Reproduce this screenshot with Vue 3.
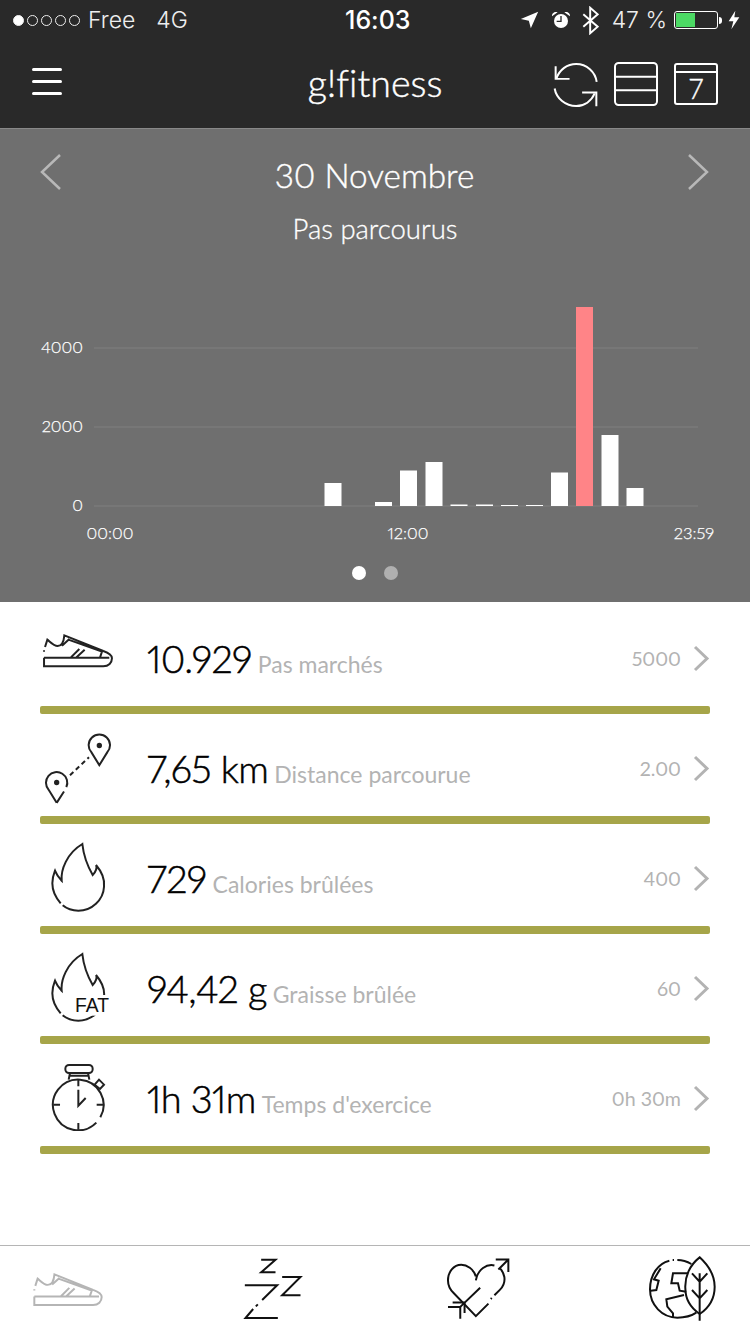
<script setup>
const bars = [
  { x: 324.5, top: 483 },
  { x: 375, top: 502 },
  { x: 400, top: 470.5 },
  { x: 425.5, top: 462 },
  { x: 450.5, top: 504.5 },
  { x: 476, top: 504.5 },
  { x: 501, top: 505 },
  { x: 526, top: 505 },
  { x: 551, top: 472.5 },
  { x: 576, top: 307, hot: true },
  { x: 601.5, top: 435 },
  { x: 626.5, top: 488 }
]

const gridLines = [
  { y: 348, label: '4000' },
  { y: 427, label: '2000' },
  { y: 506, label: '0' }
]

const hours = [
  { x: 110, label: '00:00' },
  { x: 408, label: '12:00' },
  { x: 694, label: '23:59' }
]

const stats = [
  { id: 'steps', value: '10.929', label: 'Pas marchés', goal: '5000' },
  { id: 'route', value: '7,65 km', label: 'Distance parcourue', goal: '2.00' },
  { id: 'flame', value: '729', label: 'Calories brûlées', goal: '400' },
  { id: 'fat', value: '94,42 g', label: 'Graisse brûlée', goal: '60' },
  { id: 'watch', value: '1h 31m', label: "Temps d'exercice", goal: '0h 30m' }
]

const flame = 'M122 220C108 204 97 182 97 160C97 145 101 132 105 122C110 135 118 145 125 152C122 120 140 70 187 42C190 70 195 95 218 135C228 125 232 112 228 105C245 125 255 145 252 170C250 210 215 242 175 242C155 242 140 236 128 226'
const shoe = 'M72 112V138H250C266 138 276 127 276 114C276 104 268 98 250 92L133 45C131 66 125 77 113 77C100 77 90 64 82 58L75 80M72 90V94M72 112H268M126 76L148 56M145 58L246 94L240 112M152 112L178 86M168 112L194 88'
</script>

<template>
  <div class="page">
    <header class="top">
      <div class="status">
        <div class="status-left">
          <div class="signal">
            <i class="on"></i><i></i><i></i><i></i><i></i>
          </div>
          <span class="carrier">Free</span>
          <span class="net">4G</span>
        </div>
        <span class="clock">16:03</span>
        <div class="status-right">
          <svg class="st-loc" viewBox="66 36 56 54"><polygon points="68,60 120,38 98,88 92,65" fill="#fff" /></svg>
          <svg class="st-alarm" viewBox="158 32 60 54">
            <circle cx="188" cy="62" r="21" fill="#fff" />
            <path d="M161 48C160 38 170 32 178 36ZM215 48C216 38 206 32 198 36Z" fill="#fff" />
            <path d="M188 47V63H175" fill="none" stroke="#292929" stroke-width="4" />
          </svg>
          <svg class="st-bt" viewBox="250 18 52 86"><path d="M254 42L298 80L275 100V22L298 42L254 80" fill="none" stroke="#fff" stroke-width="6" /></svg>
          <span class="pct">47 %</span>
          <div class="battery"><div class="battery-fill"></div></div>
          <div class="battery-nub"></div>
          <svg class="st-bolt" viewBox="686 30 36 60"><polygon points="708,32 688,64 702,64 696,88 720,52 705,52" fill="#fff" /></svg>
        </div>
      </div>
      <nav class="nav">
        <div class="burger"><span></span><span></span><span></span></div>
        <h1 class="brand">g!fitness</h1>
        <div class="nav-icons">
          <svg class="nav-sync" viewBox="160 182 136 136" fill="none" stroke="#fff" stroke-width="6">
            <path d="M170 232C180 205 203 188 230 188C262 188 288 212 292 242" />
            <path d="M168 195V233H210" />
            <path d="M165 262C170 292 198 315 230 315C255 315 276 300 286 277" />
            <path d="M248 274H291V316" />
          </svg>
          <svg class="nav-table" viewBox="342 187 132 132" fill="none" stroke="#fff" stroke-width="6">
            <rect x="345" y="190" width="126" height="126" rx="11" />
            <path d="M345 231H471M345 272H471" />
          </svg>
          <div class="nav-cal">7</div>
        </div>
      </nav>
    </header>

    <section class="hero">
      <div class="hero-head">
        <svg class="chev" viewBox="0 0 22 38"><path d="M20 2L2 19L20 36" /></svg>
        <div class="hero-date">30 Novembre</div>
        <svg class="chev" viewBox="0 0 22 38"><path d="M2 2L20 19L2 36" /></svg>
      </div>
      <div class="hero-title">Pas parcourus</div>
      <svg class="chart" viewBox="0 260 750 290" width="750" height="290">
        <g v-for="line in gridLines" :key="line.y">
          <line x1="94" x2="698" :y1="line.y" :y2="line.y" stroke="#808080" stroke-width="1" />
          <text x="83" :y="line.y + 5" text-anchor="end" class="chart-text">{{ line.label }}</text>
        </g>
        <rect
          v-for="bar in bars"
          :key="bar.x"
          :x="bar.x"
          :y="bar.top"
          width="17"
          :height="506 - bar.top"
          :fill="bar.hot ? '#ff8487' : '#fff'"
        />
        <text v-for="h in hours" :key="h.x" :x="h.x" y="539" text-anchor="middle" class="chart-text">{{ h.label }}</text>
      </svg>
      <div class="dots"><span class="dot active"></span><span class="dot"></span></div>
    </section>

    <main class="stats">
      <div v-for="s in stats" :key="s.id" class="stat">
        <div class="stat-body">
          <div class="stat-icon">
            <svg v-if="s.id === 'steps'" class="ic-shoe" viewBox="66 38 216 106" fill="none" stroke="#222" stroke-width="6">
              <path :d="shoe" />
            </svg>
            <svg v-else-if="s.id === 'route'" class="ic-route" viewBox="70 335 210 215" fill="none" stroke="#222" stroke-width="6">
              <path d="M239 431L215 392A32 32 0 1 1 263 392Z" />
              <circle cx="239" cy="372" r="5" fill="#222" />
              <path d="M111 544L87 505A32 32 0 1 1 140 497M133 510L111 544" />
              <circle cx="111" cy="483" r="5" fill="#222" />
              <path d="M151 461L208 407" stroke-dasharray="14 10" />
            </svg>
            <svg v-else-if="s.id === 'flame'" class="ic-flame" viewBox="90 36 170 212" fill="none" stroke="#222" stroke-width="6">
              <path :d="flame" />
            </svg>
            <svg v-else-if="s.id === 'fat'" class="ic-fat" viewBox="90 36 180 212" fill="none" stroke="#222" stroke-width="6">
              <path :d="flame" />
              <rect x="156" y="165" width="114" height="62" fill="#fff" stroke="none" />
              <text x="165" y="215" class="fat-text">FAT</text>
            </svg>
            <svg v-else class="ic-watch" viewBox="90 700 170 205" fill="none" stroke="#222" stroke-width="6">
              <path d="M229 879A76 76 0 1 1 241 863" />
              <rect x="136" y="706" width="82" height="24" rx="11" />
              <path d="M150 730L146 750M204 730L208 750M150 738H204" />
              <path d="M224 765L237 750L252 765L240 778Z" />
              <path d="M175 750V770M175 880V900M100 825H120M230 825H250" />
              <path d="M175 780V828L197 805" />
            </svg>
          </div>
          <span class="stat-value">{{ s.value }}</span>
          <span class="stat-label">{{ s.label }}</span>
          <div class="stat-right">
            <span class="stat-goal">{{ s.goal }}</span>
            <svg class="stat-chev" viewBox="0 0 17 27"><path d="M2 2L14 13.5L2 25" /></svg>
          </div>
        </div>
        <div class="stat-bar"></div>
      </div>
    </main>

    <footer class="tabs">
      <svg class="tab-shoe" viewBox="66 38 216 106" fill="none" stroke="#b5b5b5" stroke-width="6">
        <path :d="shoe" />
      </svg>
      <svg class="tab-zzz" viewBox="725 52 185 192" fill="none" stroke="#111" stroke-width="6">
        <path d="M782 60H825L782 98H825M845 112H900L845 167H900" />
        <path d="M733 137H830L785 181M772 194L766 200M758 208L735 235H832" />
      </svg>
      <svg class="tab-heart" viewBox="212 50 196 192" fill="none" stroke="#111" stroke-width="6">
        <path d="M302 108C295 85 275 73 258 73C235 73 218 95 218 120C218 135 225 148 235 158L302 228L340 190M347 176L350 173M358 165L375 148C385 138 390 125 388 110C386 100 381 90 375 84M358 75C335 70 308 85 302 120" />
        <path d="M400 57L370 87M315 142L255 200M362 57H400V95" />
        <path d="M218 200H258M232 187H268M255 236V198M268 218V187" />
      </svg>
      <svg class="tab-earth" viewBox="820 48 204 198" fill="none" stroke="#111" stroke-width="6">
        <path d="M975 52C945 75 930 110 932 145C932 180 950 205 975 222C1000 205 1020 180 1020 140C1020 105 1000 75 975 52Z" />
        <path d="M975 100V242M952 100L975 125L998 100M952 150L975 175L998 150" />
        <path d="M950 72C935 63 920 60 908 60M898 60H894M884 62C850 70 826 105 826 148C826 195 862 233 908 233C930 233 950 228 965 218" />
        <path d="M858 85L838 118L852 122L845 150L828 152" />
        <path d="M940 100H895L890 130H910L915 152L935 155" />
        <path d="M928 165L875 178L878 200L895 220V232" />
      </svg>
    </footer>
  </div>
</template>

<style>
html, body { margin: 0; background: #fff; }
</style>

<style scoped>
.page {
  width: 750px;
  height: 1334px;
  display: flex;
  flex-direction: column;
  font-family: Lato, "Open Sans", sans-serif;
  font-weight: 300;
  font-variant-numeric: proportional-nums;
  font-variant-ligatures: none;
  overflow: hidden;
}

.top {
  height: 128px;
  background: #292929;
  color: #fff;
  display: flex;
  flex-direction: column;
  flex-shrink: 0;
}

.status {
  height: 40px;
  position: relative;
  display: flex;
  align-items: center;
  justify-content: space-between;
  padding: 0 10px 0 13px;
  font-family: Inter, sans-serif;
  font-size: 23px;
  font-weight: 300;
  color: #eee;
}

.status-left, .status-right {
  display: flex;
  align-items: center;
}

.signal {
  display: flex;
  gap: 3px;
  margin-right: 8px;
}

.signal i {
  width: 9px;
  height: 9px;
  border: 1px solid #eee;
  border-radius: 50%;
}

.signal i.on { background: #fff; }

.net { margin-left: 21px; }

.clock {
  position: absolute;
  left: 345px;
  font-size: 25px;
  font-weight: 500;
  color: #fff;
}

.st-loc { width: 19px; height: 18px; }
.st-alarm { width: 20px; height: 18px; margin-left: 12px; }
.st-bt { width: 17px; height: 29px; margin-left: 11px; }
.pct { margin-left: 13px; }

.battery {
  width: 40px;
  height: 14px;
  border: 1px solid #fff;
  border-radius: 3px;
  margin-left: 7px;
  padding: 1px;
  box-sizing: content-box;
}

.battery-fill {
  width: 19px;
  height: 100%;
  background: #4cd964;
}

.battery-nub {
  width: 3px;
  height: 7px;
  margin-left: 1px;
  background: #fff;
  border-radius: 0 3px 3px 0;
}

.st-bolt { width: 12px; height: 20px; margin-left: 6px; }

.nav {
  flex: 1;
  position: relative;
  display: flex;
  align-items: center;
  justify-content: space-between;
  padding: 0 32px;
}

.burger {
  width: 30px;
  display: flex;
  flex-direction: column;
  gap: 9px;
  margin-top: -6px;
}

.burger span {
  height: 3px;
  background: #fff;
  border-radius: 2px;
}

.brand {
  position: absolute;
  left: 0;
  right: 0;
  margin: -4px 0 0;
  text-align: center;
  font-size: 37.5px;
  font-weight: 300;
  -webkit-text-stroke: 0.4px #fff;
}

.nav-icons {
  display: flex;
  align-items: center;
  gap: 16px;
  position: relative;
}

.nav-sync { width: 45px; height: 45px; }
.nav-table { width: 44px; height: 44px; }

.nav-cal {
  width: 40px;
  height: 30px;
  padding-top: 8px;
  border: 2px solid #fff;
  border-radius: 3px;
  background: linear-gradient(#fff, #fff) 0 6px / 100% 2px no-repeat;
  text-align: center;
  font-size: 27px;
  font-weight: 300;
  line-height: 32px;
  -webkit-text-stroke: 0.4px #fff;
}

.hero {
  height: 474px;
  background: #6f6f6f;
  border-top: 1px solid #888;
  box-sizing: border-box;
  color: #fff;
  display: flex;
  flex-direction: column;
  flex-shrink: 0;
}

.hero-head {
  display: flex;
  align-items: flex-start;
  justify-content: space-between;
  padding: 24px 41px 0 40px;
}

.hero-date {
  font-size: 33.3px;
  line-height: 45px;
  -webkit-text-stroke: 0.4px #fff;
}

.chev {
  width: 22px;
  height: 38px;
  fill: none;
  stroke: #b8b8b8;
  stroke-width: 2.5;
}

.hero-title {
  text-align: center;
  font-size: 27.5px;
  line-height: 34px;
  margin-top: 14px;
  -webkit-text-stroke: 0.3px #fff;
}

.chart { display: block; margin-top: 14px; }

.chart-text {
  fill: #fff;
  font-size: 16.5px;
  font-family: Lato, "Open Sans", sans-serif;
  font-weight: 300;
  stroke: #fff;
  stroke-width: 0.25px;
}

.dots {
  display: flex;
  justify-content: center;
  gap: 18px;
  margin-top: 16px;
}

.dot {
  width: 14px;
  height: 14px;
  border-radius: 50%;
  background: #b0b0b0;
}

.dot.active { background: #fff; }

.stats {
  flex: 1;
  padding: 2px 40px 0;
  background: #fff;
}

.stat {
  height: 110px;
  display: flex;
  flex-direction: column;
}

.stat-body {
  flex: 1;
  display: flex;
  align-items: baseline;
  padding-top: 31px;
  box-sizing: border-box;
}

.stat-icon {
  width: 107px;
  flex-shrink: 0;
  align-self: flex-start;
  position: relative;
}

.stat-icon svg {
  position: absolute;
  display: block;
}

.ic-shoe { width: 72px; height: 35.3px; left: 2px; top: -2px; }
.ic-route { width: 70px; height: 72px; left: 3px; top: -12px; }
.ic-flame { width: 56.7px; height: 70.7px; left: 10px; top: -13px; }
.ic-fat { width: 60px; height: 70.7px; left: 10px; top: -13px; }
.ic-watch { width: 56.7px; height: 68.3px; left: 10px; top: -12px; }

.fat-text {
  font-family: "Liberation Sans", sans-serif;
  font-size: 58px;
  font-weight: 400;
  fill: #111;
  stroke: none;
}

.stat-value {
  font-size: 38px;
  font-weight: 300;
  letter-spacing: -0.6px;
  color: #000;
  margin-right: 6px;
  -webkit-text-stroke: 0.5px #000;
}

.stat-label {
  font-size: 23px;
  color: #b3b3b3;
  font-weight: 400;
}

.stat-right {
  margin-left: auto;
  margin-top: 2px;
  height: 42px;
  align-self: flex-start;
  display: flex;
  align-items: center;
}

.stat-goal {
  font-size: 19.6px;
  color: #b3b3b3;
  font-weight: 400;
}

.stat-chev {
  width: 17px;
  height: 27px;
  margin-left: 12px;
  fill: none;
  stroke: #b3b3b3;
  stroke-width: 3;
}

.stat-bar {
  height: 8px;
  background: #a6a549;
  border-radius: 2px;
}

.tabs {
  height: 86px;
  border-top: 1px solid #b5b5b5;
  display: flex;
  align-items: center;
  padding: 0 0 2px 32px;
  box-sizing: content-box;
  background: #fff;
  flex-shrink: 0;
}

.tab-shoe { width: 72px; height: 35px; }
.tab-zzz { width: 62px; height: 64px; margin-left: 138px; }
.tab-heart { width: 65px; height: 64px; margin-left: 142px; }
.tab-earth { width: 68px; height: 66px; margin-left: 137px; }
</style>
